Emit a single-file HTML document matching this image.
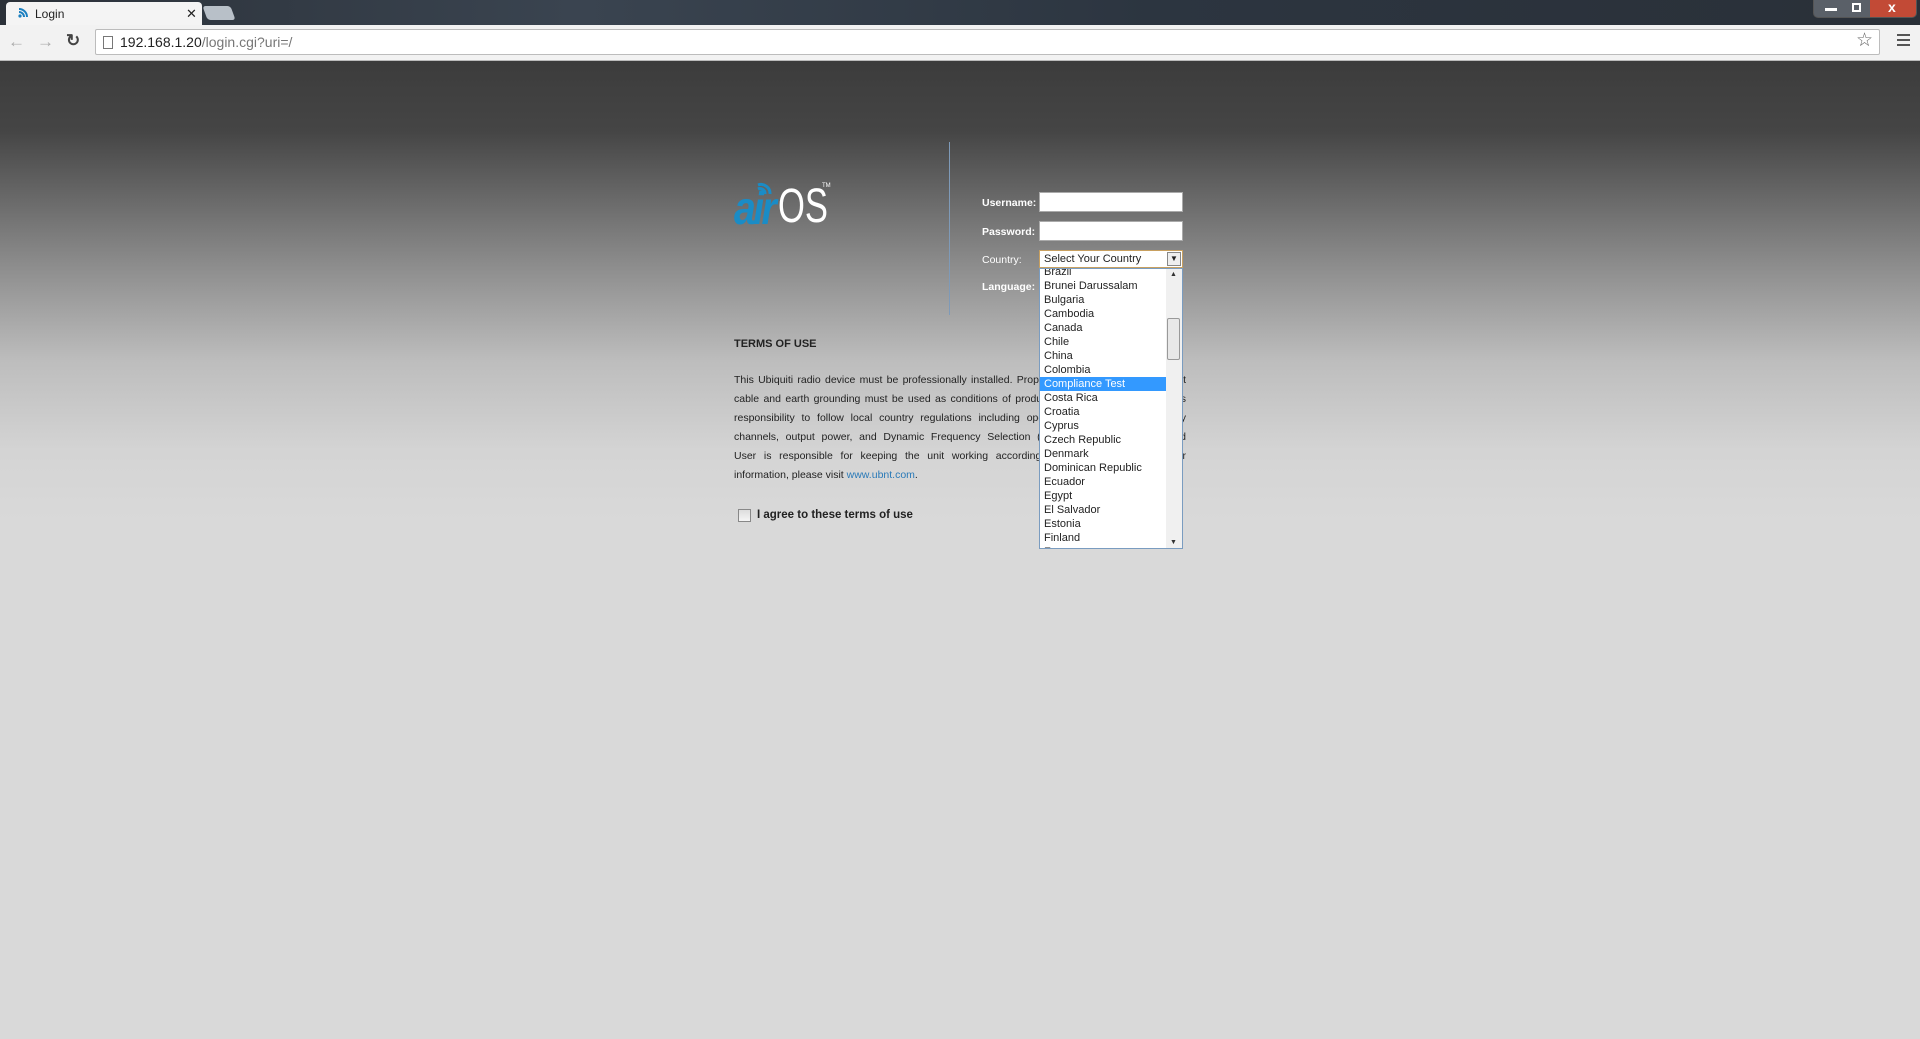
<!DOCTYPE html>
<html><head><meta charset="utf-8"><style>
*{margin:0;padding:0;box-sizing:border-box}
body{width:1920px;height:1039px;overflow:hidden;font-family:"Liberation Sans",sans-serif;position:relative;background:#d9d9d9}
.tabbar{position:absolute;left:0;top:0;width:1920px;height:26px;background:linear-gradient(90deg,#2b3139,#3a4450 30%,#2c3540 60%,#2a3038)}
.tab{position:absolute;left:6px;top:2px;width:196px;height:24px;background:#f4f4f4;border-radius:4px 4px 0 0;font-size:12px;color:#222}
.toolbar{position:absolute;left:0;top:25px;width:1920px;height:36px;background:#f2f2f2;border-bottom:1px solid #bbb}
.addr{position:absolute;left:95px;top:4px;width:1785px;height:26px;background:#fff;border:1px solid #bcbcbc;border-radius:2px;font-size:14px;line-height:24px;padding-left:24px;color:#222}
.page{position:absolute;left:0;top:61px;width:1920px;height:978px;background:linear-gradient(180deg,#3c3c3c 0px,#454545 70px,#8a8a8a 200px,#bdbdbd 300px,#d4d4d4 390px,#d9d9d9 460px)}
.lbl{position:absolute;left:982px;color:#fff;font-size:10.5px;font-weight:bold}
.inp{position:absolute;left:1039px;width:144px;height:20px;background:#fff;border:1px solid #aaa}
.terms{position:absolute;left:734px;width:452px;font-size:10.5px;color:#222}
.ln{height:19px;line-height:19px;text-align:justify;text-align-last:justify;white-space:nowrap;overflow:hidden}
.list{position:absolute;left:1039px;top:268px;width:144px;height:281px;background:#fff;border:1px solid #7a9cc0;overflow:hidden;font-size:11px;color:#222}
.it{height:14px;line-height:14px;padding-left:4px;width:127px}
</style></head><body>
<div class="tabbar">
 <div class="tab"><svg style="position:absolute;left:11px;top:5px" width="12" height="12" viewBox="0 0 12 12"><path d="M2 2a8 8 0 0 1 8 8M2 5a5 5 0 0 1 5 5" stroke="#1a7fc0" stroke-width="2" fill="none"/><circle cx="3" cy="9" r="1.6" fill="#1a7fc0"/></svg><span style="position:absolute;left:29px;top:5px">Login</span><span style="position:absolute;left:180px;top:4px;font-size:13px">✕</span></div>
 <div style="position:absolute;left:205px;top:6px;width:28px;height:14px;background:#b8c0c8;transform:skewX(20deg);border-radius:3px"></div>
 <div style="position:absolute;left:1813px;top:0;width:104px;height:18px;border:1px solid #555;border-top:0;border-radius:0 0 5px 5px;background:linear-gradient(90deg,#5a6068 0 56px,#c24a36 56px)"><span style="position:absolute;left:11px;top:8px;width:12px;height:3px;background:#fff"></span><span style="position:absolute;left:38px;top:3px;width:9px;height:9px;border:2px solid #fff"></span><span style="position:absolute;left:74px;top:-1px;color:#fff;font-weight:bold;font-size:14px">x</span></div>
</div>
<div class="toolbar">
 <span style="position:absolute;left:8px;top:7px;color:#aaa;font-size:17px">←</span>
 <span style="position:absolute;left:37px;top:7px;color:#aaa;font-size:17px">→</span>
 <span style="position:absolute;left:66px;top:6px;color:#444;font-size:17px;font-weight:bold">↻</span>
 <div class="addr"><span style="position:absolute;left:7px;top:6px;width:10px;height:13px;border:1px solid #777"></span>192.168.1.20<span style="color:#777">/login.cgi?uri=/</span><span style="position:absolute;right:6px;top:-1px;font-size:19px;color:#666">☆</span></div>
 <span style="position:absolute;left:1897px;top:9px;width:13px;height:2px;background:#555;box-shadow:0 5px 0 #555,0 10px 0 #555"></span>
</div>
<div class="page">
 <div style="position:absolute;left:949px;top:81px;width:1px;height:173px;background:#7e9ab8"></div>
 <div style="position:absolute;left:734px;top:110px;height:50px">
  <svg style="position:absolute;left:22px;top:8px" width="18" height="16" viewBox="0 0 18 16"><path d="M2 6a9 9 0 0 1 12 9M2 10a5 5 0 0 1 7 5" stroke="#1a8cc6" stroke-width="3" fill="none"/></svg>
  <span style="position:absolute;left:0;top:10px;font-size:46px;font-style:italic;color:#1a8cc6;font-weight:bold;letter-spacing:-3px;display:inline-block;transform:scaleX(.85);transform-origin:left">air</span>
  <span style="position:absolute;left:44px;top:8px;font-size:48px;color:#fff;display:inline-block;transform:scaleX(.72);transform-origin:left">OS</span>
  <span style="position:absolute;left:88px;top:12px;font-size:6px;color:#fff">TM</span>
 </div>
 <div class="lbl" style="top:136px">Username:</div>
 <div class="lbl" style="top:165px">Password:</div>
 <div class="lbl" style="top:193px;font-weight:normal">Country:</div>
 <div class="lbl" style="top:220px">Language:</div>
 <div class="inp" style="top:131px"></div>
 <div class="inp" style="top:160px"></div>
 <div class="inp" style="top:189px;height:18px;border-color:#c8a060;font-size:11px;color:#222;line-height:17px;padding-left:4px">Select Your Country<span style="position:absolute;right:1px;top:1px;width:14px;height:14px;border:1px solid #888;background:#eee;font-size:8px;line-height:12px;text-align:center">▼</span></div>
 <div style="position:absolute;left:734px;top:277px;font-size:11px;font-weight:bold;color:#222">TERMS OF USE</div>
 <div class="terms" style="top:310px">
  <div class="ln">This Ubiquiti radio device must be professionally installed. Properly installed shielded Ethernet</div>
  <div class="ln">cable and earth grounding must be used as conditions of product warranty. It is the installer's</div>
  <div class="ln">responsibility to follow local country regulations including operation within legal frequency</div>
  <div class="ln">channels, output power, and Dynamic Frequency Selection (DFS) requirements. The End</div>
  <div class="ln">User is responsible for keeping the unit working according to these rules. For further</div>
  <div class="ln" style="text-align-last:left">information, please visit <span style="color:#2a7ab8">www.ubnt.com</span>.</div>
 </div>
 <div style="position:absolute;left:738px;top:448px;width:13px;height:13px;border:1px solid #888;background:linear-gradient(#ddd,#f5f5f5)"></div>
 <div style="position:absolute;left:757px;top:448px;font-size:11.5px;font-weight:bold;color:#222">I agree to these terms of use</div>
 <div class="list" style="top:207px">
  <div style="margin-top:-4px">
  <div class="it">Brazil</div><div class="it">Brunei Darussalam</div><div class="it">Bulgaria</div><div class="it">Cambodia</div><div class="it">Canada</div><div class="it">Chile</div><div class="it">China</div><div class="it">Colombia</div><div class="it" style="background:#3399ff;color:#fff">Compliance Test</div><div class="it">Costa Rica</div><div class="it">Croatia</div><div class="it">Cyprus</div><div class="it">Czech Republic</div><div class="it">Denmark</div><div class="it">Dominican Republic</div><div class="it">Ecuador</div><div class="it">Egypt</div><div class="it">El Salvador</div><div class="it">Estonia</div><div class="it">Finland</div><div class="it">France</div>
  </div>
  <div style="position:absolute;right:0;top:0;width:16px;height:100%;background:#f0f0f0"><span style="position:absolute;left:4px;top:2px;font-size:7px;color:#333">▲</span><div style="position:absolute;left:1px;top:49px;width:13px;height:42px;border:1px solid #999;background:#e8e8e8;border-radius:2px"></div><span style="position:absolute;left:4px;bottom:2px;font-size:7px;color:#333">▼</span></div>
 </div>
</div>
</body></html>
